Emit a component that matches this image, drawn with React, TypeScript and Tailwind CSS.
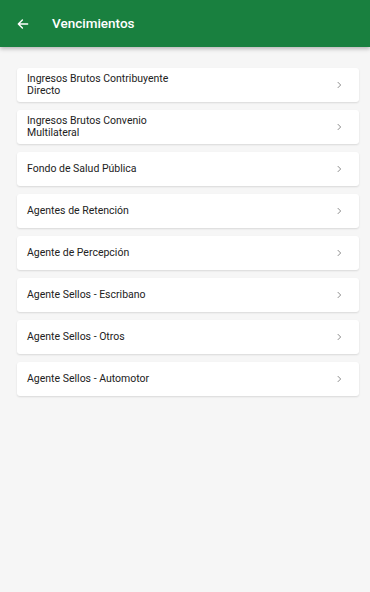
import React from 'react';

const items = [
  'Ingresos Brutos Contribuyente\nDirecto',
  'Ingresos Brutos Convenio\nMultilateral',
  'Fondo de Salud Pública',
  'Agentes de Retención',
  'Agente de Percepción',
  'Agente Sellos - Escribano',
  'Agente Sellos - Otros',
  'Agente Sellos - Automotor',
];

const Chevron = () => (
  <svg width="10" height="10" viewBox="0 0 24 24" fill="none" stroke="#757575" strokeWidth="2">
    <path d="M9 5l7 7-7 7" />
  </svg>
);

export default function App() {
  return (
    <div className="min-h-[592px] bg-[#f6f6f6] font-['Roboto',sans-serif]">
      <header className="flex h-[47px] items-center bg-[#19803f] pl-[16px] text-white shadow-[0_2px_4px_rgba(0,0,0,0.25)]">
        <svg width="14" height="14" viewBox="0 0 24 24" fill="none" stroke="white" strokeWidth="2.4" strokeLinecap="round" strokeLinejoin="round">
          <path d="M20 12H4M11 5l-7 7 7 7" />
        </svg>
        <h1 className="ml-[22px] text-[13.5px] font-medium">Vencimientos</h1>
      </header>
      <div className="flex flex-col gap-[8px] pl-[17px] pr-[11px] pt-[21px]">
        {items.map((t) => (
          <div
            key={t}
            className="flex h-[34px] items-center justify-between rounded-[3px] bg-white pl-[10px] pr-[15px] shadow-[0_1px_2px_rgba(0,0,0,0.12)]"
          >
            <span className="whitespace-pre-line text-[10.5px] leading-[12.5px] text-[#222]">{t}</span>
            <Chevron />
          </div>
        ))}
      </div>
    </div>
  );
}
